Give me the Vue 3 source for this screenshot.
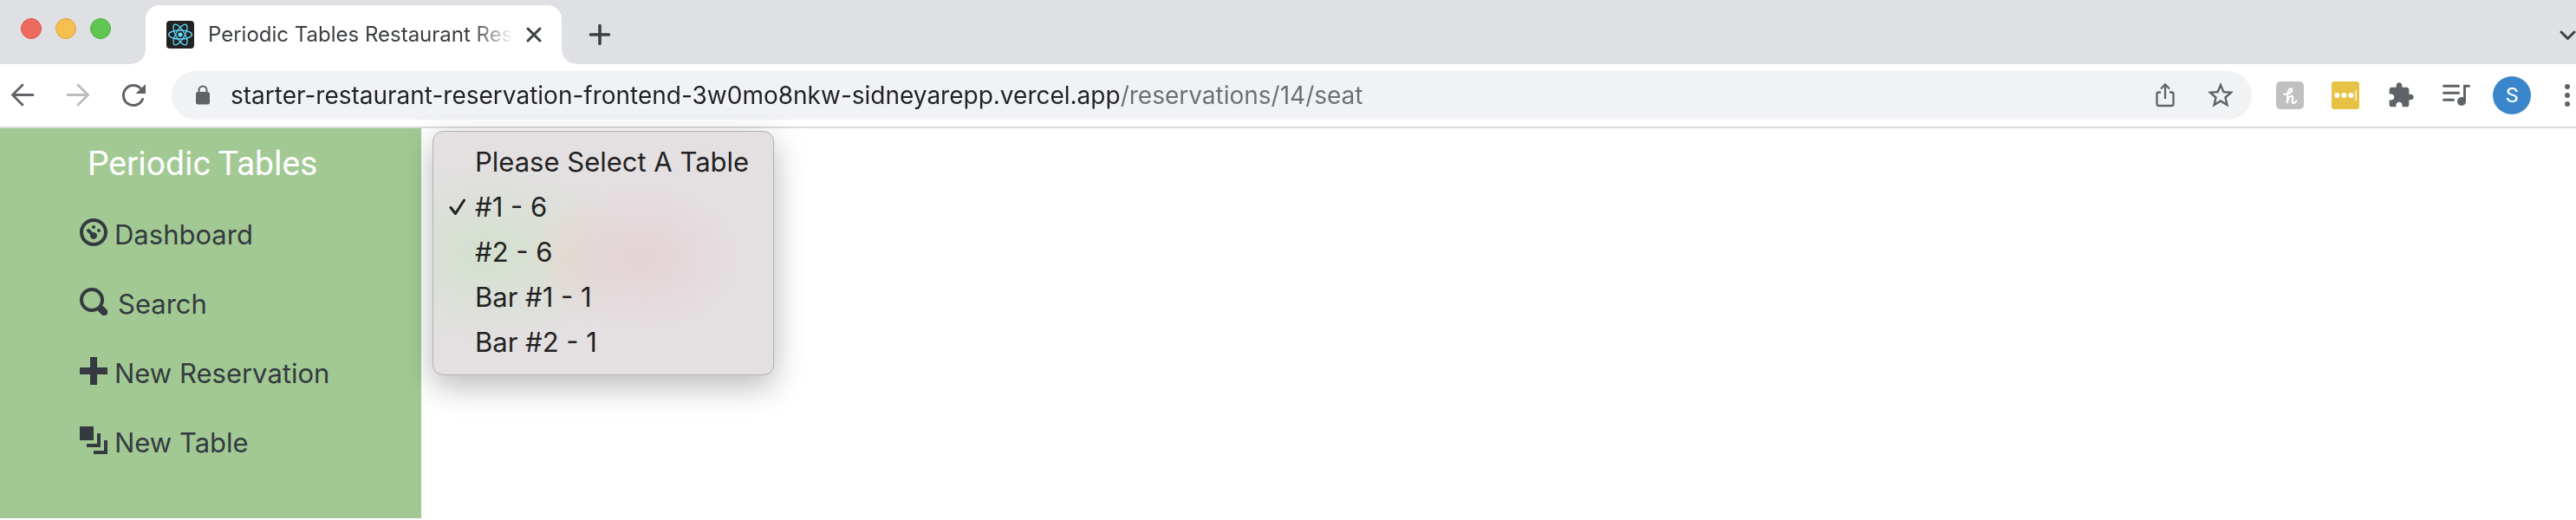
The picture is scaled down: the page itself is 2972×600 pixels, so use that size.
<script setup>
import { ref } from 'vue'

const url = ref('starter-restaurant-reservation-frontend-3w0mo8nkw-sidneyarepp.vercel.app/reservations/14/seat')

const links = [
  {
    label: 'Dashboard',
    icon: 'M4 0c-2.2 0-4 1.8-4 4s1.8 4 4 4 4-1.8 4-4-1.8-4-4-4zm0 1c1.66 0 3 1.34 3 3s-1.34 3-3 3-3-1.34-3-3 1.34-3 3-3zm0 1c-.28 0-.5.22-.5.5s.22.5.5.5.5-.22.5-.5-.22-.5-.5-.5zm-1.66 1a.5.5 0 0 0-.19.84l.91.91c-.02.08-.06.16-.06.25 0 .55.45 1 1 1s1-.45 1-1-.45-1-1-1c-.09 0-.17.04-.25.06l-.91-.91a.5.5 0 0 0-.5-.15zm3.16 0c-.28 0-.5.22-.5.5s.22.5.5.5.5-.22.5-.5-.22-.5-.5-.5z',
  },
  {
    label: 'Search',
    wide: true,
    icon: 'M3.5 0c-1.93 0-3.5 1.57-3.5 3.5s1.57 3.5 3.5 3.5c.59 0 1.17-.14 1.66-.41a1 1 0 0 0 .13.13l1 1a1.02 1.02 0 1 0 1.44-1.44l-1-1a1 1 0 0 0-.16-.13c.27-.49.44-1.06.44-1.66 0-1.93-1.55-3.5-3.5-3.5zm0 1c1.39 0 2.5 1.11 2.5 2.5 0 .66-.24 1.27-.66 1.72-.01.01-.02.02-.03.03a1 1 0 0 0-.13.13c-.44.4-1.04.63-1.69.63-1.39 0-2.5-1.11-2.5-2.5s1.11-2.5 2.5-2.5z',
  },
  { label: 'New Reservation', icon: 'M3 0v3h-3v2h3v3h2v-3h3v-2h-3v-3h-2z' },
  { label: 'New Table', icon: 'M0 0v4h4v-4h-4zm5 2v3h-3v1h4v-4h-1zm2 2v3h-3v1h4v-4h-1z' },
]

const tables = ['Please Select A Table', '#1 - 6', '#2 - 6', 'Bar #1 - 1', 'Bar #2 - 1']
const selected = ref(1)
</script>

<template>
  <div class="browser">
    <header class="tabstrip">
      <div class="lights">
        <button class="light red" aria-label="Close window"></button>
        <button class="light amber" aria-label="Minimise window"></button>
        <button class="light green" aria-label="Zoom window"></button>
      </div>
      <div class="tab">
        <svg class="i32" viewBox="0 0 32 32" aria-hidden="true">
          <rect width="32" height="32" rx="4" fill="#222" />
          <g fill="none" stroke="#61dafb" stroke-width="1.3">
            <ellipse cx="16" cy="16" rx="13.4" ry="5" />
            <ellipse cx="16" cy="16" rx="13.4" ry="5" transform="rotate(60 16 16)" />
            <ellipse cx="16" cy="16" rx="13.4" ry="5" transform="rotate(120 16 16)" />
          </g>
          <circle cx="16" cy="16" r="2.6" fill="#61dafb" />
        </svg>
        <span class="tab-title">Periodic Tables Restaurant Res</span>
        <button class="icon close" aria-label="Close tab">
          <svg viewBox="0 0 24 24"><path d="M5 5l14 14M19 5L5 19" fill="none" stroke="#3c4043" stroke-width="3" stroke-linecap="round" /></svg>
        </button>
      </div>
      <button class="icon add" aria-label="New tab">
        <svg viewBox="0 0 32 32"><path d="M16 5.5v21M5.500 16h21" fill="none" stroke="#3c4043" stroke-width="3.6" stroke-linecap="round" /></svg>
      </button>
      <button class="icon chevron" aria-label="Search tabs">
        <svg viewBox="0 0 20 20"><path d="M3 6l7.500 7.500L18 6" fill="none" stroke="#3c4043" stroke-width="3" stroke-linecap="round" /></svg>
      </button>
    </header>

    <div class="toolbar">
      <div class="nav">
        <button class="icon" aria-label="Back">
          <svg viewBox="0 0 32 32"><path d="M28 15.500H5M16 4L4.500 15.500L16 27" fill="none" stroke="#5f6368" stroke-width="2.8" stroke-linecap="round" /></svg>
        </button>
        <button class="icon" aria-label="Forward">
          <svg viewBox="0 0 32 32"><path d="M4 15.500h23M16 4l11.500 11.500L16 27" fill="none" stroke="#babcbe" stroke-width="2.8" stroke-linecap="round" /></svg>
        </button>
        <button class="icon" aria-label="Reload">
          <svg viewBox="0 0 32 32">
            <path d="M26.500 20.500A11.500 11.500 0 1 1 24.800 8.800" fill="none" stroke="#5f6368" stroke-width="3" stroke-linecap="round" />
            <path d="M30 3v11H18.500z" fill="#5f6368" />
          </svg>
        </button>
      </div>
      <div class="omnibox">
        <svg class="lock" viewBox="0 0 20 24" aria-hidden="true">
          <rect x="2" y="8" width="16" height="14.500" rx="2.500" fill="#5f6368" />
          <path d="M5.500 9V6a4.500 4.500 0 0 1 9 0v3" fill="none" stroke="#5f6368" stroke-width="2" />
        </svg>
        <input v-model="url" class="url" type="text" aria-label="Address" spellcheck="false" />
        <button class="icon" aria-label="Share">
          <svg viewBox="0 0 32 32">
            <path d="M11 12.500H8.500a2 2 0 0 0-2 2V26a2 2 0 0 0 2 2h15a2 2 0 0 0 2-2V14.500a2 2 0 0 0-2-2H21M16 20V4M11 8.500l5-5 5 5" fill="none" stroke="#5f6368" stroke-width="2.300" />
          </svg>
        </button>
        <button class="icon star" aria-label="Bookmark this page">
          <svg viewBox="0 0 24 24"><path fill="#5f6368" d="M22 9.240l-7.190-.62L12 2 9.190 8.630 2 9.240l5.460 4.730L5.820 21 12 17.270 18.180 21l-1.630-7.030L22 9.240zM12 15.400l-3.760 2.270 1-4.280-3.320-2.880 4.380-.38L12 6.100l1.710 4.040 4.380.38-3.320 2.880 1 4.280L12 15.400z" /></svg>
        </button>
      </div>
      <div class="extensions">
        <button class="icon" aria-label="Shopping coupons">
          <svg viewBox="0 0 32 32">
            <rect width="32" height="32" rx="5" fill="#c0c0c0" />
            <path d="M9 14.500C12 15.500 18.500 13 18.200 9.500C17.800 7 14.600 8.500 13.800 12C13 16 13 20 12.800 24.500C13.500 20 15.500 17 18 16.800C21 17 18 22 18.800 24C19.500 25.800 22 24.800 23.500 22.500" fill="none" stroke="#fff" stroke-width="2.200" stroke-linecap="round" stroke-linejoin="round" />
          </svg>
        </button>
        <button class="icon" aria-label="Password manager">
          <svg viewBox="0 0 32 32">
            <rect width="32" height="32" rx="3" fill="#e6c344" />
            <g fill="#fff"><circle cx="6.300" cy="16" r="3" /><circle cx="14.300" cy="16" r="3" /><circle cx="22.300" cy="16" r="3" /></g>
            <path d="M28 10v12" stroke="#f5e6b0" stroke-width="2" />
          </svg>
        </button>
        <button class="icon" aria-label="Extensions">
          <svg viewBox="0 0 24 24"><path fill="#5f6368" d="M20.500 11H19V7c0-1.100-.9-2-2-2h-4V3.500C13 2.120 11.880 1 10.500 1S8 2.120 8 3.500V5H4c-1.100 0-1.990.9-1.990 2v3.800H3.500c1.490 0 2.700 1.210 2.700 2.700s-1.210 2.700-2.700 2.700H2V20c0 1.100.9 2 2 2h3.800v-1.500c0-1.490 1.210-2.700 2.700-2.700 1.490 0 2.700 1.210 2.700 2.700V22H17c1.100 0 2-.9 2-2v-4h1.500c1.380 0 2.500-1.120 2.500-2.500S21.880 11 20.500 11z" /></svg>
        </button>
        <button class="icon" aria-label="Media controls">
          <svg viewBox="0 0 32 32">
            <path d="M1.500 5.300h17M1.500 13.300h17M1.500 21.300h11M25.500 22V5.300h5" fill="none" stroke="#5f6368" stroke-width="3" stroke-linecap="round" />
            <circle cx="22" cy="23" r="5" fill="#5f6368" />
          </svg>
        </button>
      </div>
      <button class="avatar" aria-label="Profile S">S</button>
      <button class="icon more" aria-label="Menu">
        <svg viewBox="0 0 20 32"><g fill="#5f6368"><circle cx="10" cy="6" r="3" /><circle cx="10" cy="16" r="3" /><circle cx="10" cy="26" r="3" /></g></svg>
      </button>
    </div>

    <div class="page">
      <nav class="sidebar" aria-label="Main">
        <a class="brand" href="#">Periodic Tables</a>
        <ul>
          <li v-for="link in links" :key="link.label">
            <a href="#" :class="{ wide: link.wide }">
              <svg class="i32" viewBox="0 0 8 8" aria-hidden="true"><path fill="currentColor" :d="link.icon" /></svg>
              <span>{{ link.label }}</span>
            </a>
          </li>
        </ul>
      </nav>
      <main class="content">
        <div class="menu" role="listbox" aria-label="Table">
          <button
            v-for="(table, i) in tables"
            :key="table"
            class="option"
            role="option"
            :aria-selected="i === selected"
            @click="selected = i"
          >
            <span class="tick">
              <svg v-if="i === selected" viewBox="0 0 20 20" aria-hidden="true"><path d="M2 10.500l5.500 7L17.500 2" fill="none" stroke="#222" stroke-width="3" stroke-linecap="round" stroke-linejoin="round" /></svg>
            </span>
            <span>{{ table }}</span>
          </button>
        </div>
      </main>
    </div>
  </div>
</template>

<style>
body {
  background: #fff;
}
</style>

<style scoped>
* {
  box-sizing: border-box;
}
.browser {
  font-family: Inter, "Liberation Sans", sans-serif;
  color: #222;
}
button {
  border: 0;
  padding: 0;
  background: none;
  font-family: inherit;
  color: inherit;
}
a {
  color: inherit;
  text-decoration: none;
}
svg {
  display: block;
}
.icon,
.i32 {
  flex: none;
  width: 32px;
  height: 32px;
}
.icon svg {
  width: 100%;
  height: 100%;
}

.tabstrip {
  display: flex;
  height: 74px;
  padding: 6px 0 0 24px;
  background: #dfe0e4;
}
.lights {
  display: flex;
  gap: 16px;
  padding-top: 15px;
  margin-right: 40px;
}
.light {
  width: 24px;
  height: 24px;
  border-radius: 50%;
}
.red {
  background: #ed6a5e;
  border: 1px solid #d9574b;
}
.amber {
  background: #f5bf4f;
  border: 1px solid #dca63c;
}
.green {
  background: #61c554;
  border: 1px solid #50ac42;
}
.tab {
  position: relative;
  display: flex;
  align-items: center;
  width: 480px;
  padding: 0 20px 0 24px;
  border-radius: 16px 16px 0 0;
  background: #fff;
}
.tab::before,
.tab::after {
  content: "";
  position: absolute;
  bottom: 0;
  width: 16px;
  height: 16px;
}
.tab::before {
  right: 100%;
  background: radial-gradient(circle at 0 0, #dfe0e4 15px, #fff 16px);
}
.tab::after {
  left: 100%;
  background: radial-gradient(circle at 100% 0, #dfe0e4 15px, #fff 16px);
}
.tab-title {
  flex: 1;
  min-width: 0;
  margin: 0 12px 0 16px;
  white-space: nowrap;
  font-size: 24px;
  line-height: 32px;
  color: #3c4043;
  mask-image: linear-gradient(to left, transparent, #000 48px);
}
.close {
  width: 24px;
  height: 24px;
}
.add {
  margin: 18px 0 0 28px;
}
.chevron {
  width: 20px;
  height: 20px;
  margin: 25px 0 0 auto;
}

.toolbar {
  display: flex;
  align-items: center;
  height: 74px;
  padding-left: 10px;
  border-bottom: 2px solid #d9dadb;
  background: #fff;
}
.nav,
.extensions {
  display: flex;
  gap: 32px;
}
.omnibox {
  display: flex;
  flex: 1;
  align-items: center;
  height: 56px;
  margin: 0 28px;
  padding: 0 18px 0 26px;
  border-radius: 28px;
  background: #f1f2f4;
}
.lock {
  width: 20px;
  height: 24px;
  margin-right: 22px;
}
.url {
  flex: 1;
  min-width: 0;
  height: 40px;
  padding: 0;
  border: 0;
  outline: 0;
  font-family: inherit;
  font-size: 28px;
  color: #202124;
  -webkit-text-fill-color: transparent;
  background: linear-gradient(to right, #202124 1025px, #6c6e71 1025px);
  -webkit-background-clip: text;
  background-clip: text;
}
.star {
  width: 36px;
  height: 36px;
  margin-left: 30px;
}
.avatar {
  width: 44px;
  height: 44px;
  margin-left: 26px;
  border-radius: 50%;
  background: #3b86cb;
  color: #fff;
  font-family: Roboto, sans-serif;
  font-size: 24px;
  line-height: 44px;
}
.more {
  width: 20px;
  margin-left: 32px;
}

.page {
  display: flex;
}
.sidebar {
  width: 486px;
  padding: 16px 0 50px 92px;
  background: #a2c993;
}
.brand {
  display: block;
  padding-left: 9px;
  font-family: Roboto, sans-serif;
  font-size: 39px;
  line-height: 50px;
  color: #fff;
}
.sidebar ul {
  margin: 14px 0 0;
  padding: 0;
  list-style: none;
}
.sidebar li a {
  display: flex;
  gap: 8px;
  height: 80px;
  padding-top: 24px;
  font-size: 31px;
  line-height: 37px;
  color: #343a40;
}
.sidebar li a.wide {
  gap: 12px;
}
.content {
  position: relative;
  flex: 1;
}
.menu {
  position: absolute;
  top: 3px;
  left: 13px;
  width: 394px;
  padding: 9px 0 11px;
  border: 1px solid #b4b3b4;
  border-radius: 12px;
  background:
    radial-gradient(ellipse 120px 90px at 240px 145px, #e5d3d6, #e5d3d600),
    radial-gradient(ellipse 60px 70px at 165px 145px, #e5dacdb0, #e5dacd00),
    radial-gradient(ellipse 180px 110px at 60px 140px, #d4e0cf, #d4e0cf00),
    #e4e0e2;
  box-shadow: 0 12px 36px #00000048;
}
.option {
  display: flex;
  align-items: center;
  width: 100%;
  height: 52px;
  padding-left: 18px;
  font-size: 31px;
  line-height: 52px;
  text-align: left;
}
.tick {
  width: 30px;
}
.tick svg {
  width: 20px;
  height: 20px;
}
</style>
